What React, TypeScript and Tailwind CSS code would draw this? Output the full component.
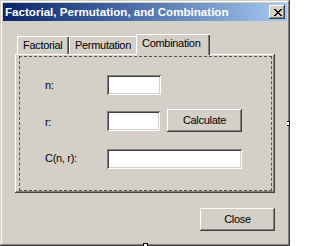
import React from "react";

const raised =
  "shadow-[inset_-1px_-1px_0_#404040,inset_1px_1px_0_#ffffff,inset_-2px_-2px_0_#808080]";
const sunken =
  "shadow-[inset_1px_1px_0_#808080,inset_-1px_-1px_0_#ffffff,inset_2px_2px_0_#404040,inset_-2px_-2px_0_#d4d0c8]";

export default function App() {
  return (
    <div className="relative w-[290px] h-[246px] bg-[#d4d0c8] p-[3px] flex flex-col font-['Liberation_Sans',Arial,sans-serif] text-black shadow-[inset_-1px_-1px_0_#404040,inset_1px_1px_0_#d4d0c8,inset_-2px_-2px_0_#808080,inset_2px_2px_0_#ffffff]">
      {/* Title bar */}
      <div className="h-[18px] flex items-center justify-between bg-gradient-to-r from-[#0a246a] to-[#a6caf0] pl-[2px] pr-[2px]">
        <span className="text-white font-bold text-[11.6px] leading-none whitespace-nowrap">
          Factorial, Permutation, and Combination
        </span>
        <div className={`w-[16px] h-[14px] bg-[#d4d0c8] flex items-center justify-center ${raised}`}>
          <svg width="8" height="7" viewBox="0 0 8 7" className="ml-[1px] mt-[0px]" shapeRendering="crispEdges">
            <path d="M0 0h2v1h-2zM6 0h2v1h-2zM1 1h2v1h-2zM5 1h2v1h-2zM2 2h4v1h-4zM3 3h2v1h-2zM2 4h4v1h-4zM1 5h2v1h-2zM5 5h2v1h-2zM0 6h2v1h-2zM6 6h2v1h-2z" fill="#000" />
          </svg>
        </div>
      </div>

      {/* Content */}
      <div className="flex flex-col pl-[12px] pt-[13px] text-[11px] tracking-[-0.3px]">
        {/* Tabs */}
        <div className="flex items-end h-[20px] pl-[2px]">
          <div className={`w-[52px] h-[18px] flex items-center pl-[6px] shadow-[inset_1px_1px_0_#ffffff,inset_-1px_0_0_#404040,inset_-2px_0_0_#808080]`}>
            Factorial
          </div>
          <div className={`w-[67px] h-[18px] flex items-center pl-[6px] shadow-[inset_1px_1px_0_#ffffff]`}>
            Permutation
          </div>
          <div className="relative z-10 w-[74px] h-[21px] mb-[-1px] bg-[#d4d0c8] flex items-center pl-[6px] pb-[2px] shadow-[inset_1px_1px_0_#ffffff,inset_-1px_0_0_#404040,inset_-2px_0_0_#808080]">
            Combination
          </div>
        </div>

        {/* Panel */}
        <div className="w-[260px] h-[139px] shadow-[inset_-1px_-1px_0_#404040,inset_1px_1px_0_#ffffff,inset_-2px_-2px_0_#808080] pt-[2px] pl-[4px]">
          <div className="w-[253px] h-[135px] border border-dashed border-[#555555] flex flex-col pl-[25px]">
            <div className="flex items-center mt-[18px] h-[20px]">
              <span className="w-[62px]">n:</span>
              <div className={`w-[54px] h-[20px] bg-white ${sunken}`} />
            </div>
            <div className="flex items-start mt-[14px] h-[23px]">
              <span className="w-[62px] mt-[5px]">r:</span>
              <div className={`w-[53px] h-[20px] mt-[2px] bg-white ${sunken}`} />
              <div className={`ml-[7px] w-[75px] h-[23px] flex items-center justify-center ${raised}`}>
                Calculate
              </div>
            </div>
            <div className="flex items-center mt-[17px] h-[20px]">
              <span className="w-[62px] -mt-[2px]">C(n, r):</span>
              <div className={`w-[135px] h-[20px] bg-white ${sunken}`} />
            </div>
          </div>
        </div>

        {/* Close */}
        <div className="w-[260px] flex justify-end mt-[15px]">
          <div className={`w-[75px] h-[23px] flex items-center justify-center ${raised}`}>
            Close
          </div>
        </div>
      </div>

      {/* small handles */}
      <div className="absolute left-[143px] top-[243px] w-[5px] h-[3px] bg-white border border-black border-b-0" />
      <div className="absolute left-[287px] top-[121px] w-[3px] h-[5px] bg-white border border-black border-l-0" />
    </div>
  );
}
